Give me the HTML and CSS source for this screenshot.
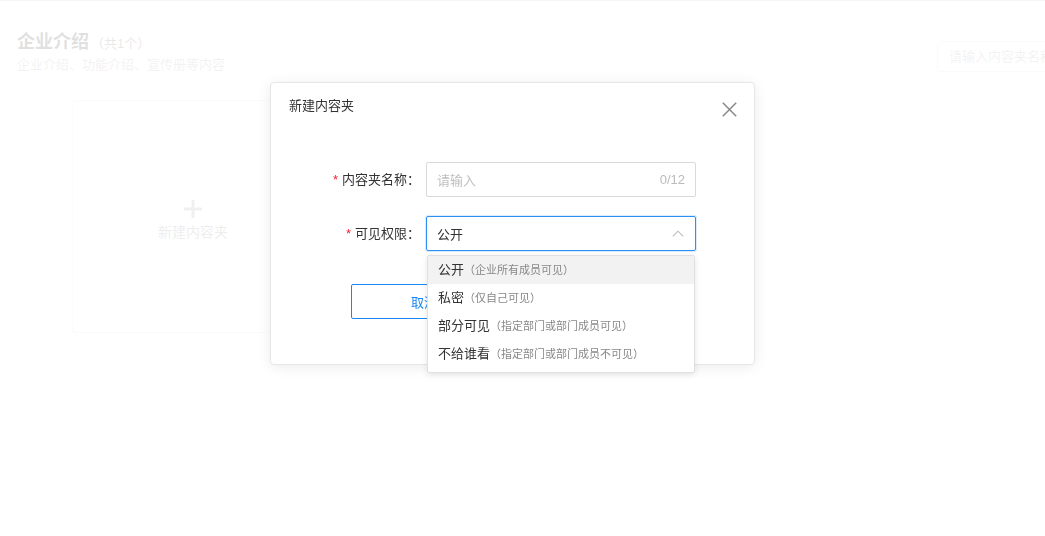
FILE: index.html
```html
<!DOCTYPE html>
<html lang="zh-CN">
<head>
<meta charset="utf-8">
<title>新建内容夹</title>
<link rel="stylesheet" href="styles.css">
</head>
<body>
<div class="page">
  <section class="content">
    <div class="head">
      <div class="titles">
        <h1 class="title">企业介绍<span class="count">（共1个）</span></h1>
        <p class="subtitle">企业介绍、功能介绍、宣传册等内容</p>
      </div>
      <div class="search">请输入内容夹名称</div>
    </div>
    <div class="cards">
      <div class="card-add">
        <svg class="plus" width="18" height="18" viewBox="0 0 18 18"><path d="M9 0v18M0 9h18" stroke="currentColor" stroke-width="3"/></svg>
        <span class="card-label">新建内容夹</span>
      </div>
    </div>
  </section>
</div>

<div class="mask"></div>

<div class="dialog">
  <div class="dialog-head">
    <span class="dialog-title">新建内容夹</span>
    <svg class="close" width="15" height="15" viewBox="0 0 15 15"><path d="M0.8 0.8L14.2 14.2M14.2 0.8L0.8 14.2" stroke="currentColor" stroke-width="1.5"/></svg>
  </div>
  <div class="form">
    <div class="row">
      <label class="label"><span class="req">*</span>内容夹名称：</label>
      <div class="input">
        <span class="placeholder">请输入</span>
        <span class="counter">0/12</span>
      </div>
    </div>
    <div class="row">
      <label class="label"><span class="req">*</span>可见权限：</label>
      <div class="select-wrap">
        <div class="select">
          <span class="value">公开</span>
          <svg class="arrow" width="12" height="7" viewBox="0 0 12 7"><path d="M0.8 6.3L6 1.2L11.2 6.3" fill="none" stroke="currentColor" stroke-width="1.1"/></svg>
        </div>
        <ul class="dropdown">
          <li class="option active">公开<span class="hint">（企业所有成员可见）</span></li>
          <li class="option">私密<span class="hint">（仅自己可见）</span></li>
          <li class="option">部分可见<span class="hint">（指定部门或部门成员可见）</span></li>
          <li class="option">不给谁看<span class="hint">（指定部门或部门成员不可见）</span></li>
        </ul>
      </div>
    </div>
  </div>
  <div class="footer">
    <button class="btn btn-cancel">取消</button>
    <button class="btn btn-ok">确定</button>
  </div>
</div>
</body>
</html>
```

FILE: styles.css
```css
* { box-sizing: border-box; }

html, body {
  margin: 0;
  padding: 0;
  width: 1045px;
  height: 536px;
  overflow: hidden;
  background: #fff;
  font-family: "Liberation Sans", "Noto Sans CJK SC", sans-serif;
  color: #333;
}

.page {
  border-top: 1px solid #bbb;
  height: 536px;
}

.content {
  padding: 29px 0 0 17px;
}

.head {
  display: flex;
  justify-content: space-between;
  align-items: flex-start;
}

.title {
  margin: 0;
  font-size: 18px;
  font-weight: 700;
  line-height: 24px;
  color: #333;
}

.count {
  font-size: 13px;
  font-weight: 400;
  color: #666;
  margin-left: 2px;
}

.subtitle {
  margin: 1px 0 0;
  font-size: 13px;
  line-height: 16px;
  color: #aaa;
}

.search {
  flex: 0 0 200px;
  margin-right: -92px;
  margin-top: 11px;
  height: 31px;
  border: 1px solid #ddd;
  border-radius: 4px;
  padding-left: 11px;
  font-size: 13px;
  line-height: 29px;
  color: #aaa;
  white-space: nowrap;
  overflow: hidden;
}

.cards {
  display: flex;
  padding: 27px 0 0 55px;
}

.card-add {
  width: 242px;
  height: 233px;
  border: 1px solid #e2e2e2;
  border-radius: 2px;
  display: flex;
  flex-direction: column;
  align-items: center;
  justify-content: center;
  gap: 4px;
  padding-top: 8px;
  color: #999;
}

.card-label {
  font-size: 14px;
  line-height: 20px;
  color: #888;
}

.mask {
  position: fixed;
  inset: 0;
  background: rgba(255, 255, 255, 0.85);
}

.dialog {
  position: fixed;
  left: 270px;
  top: 82px;
  width: 485px;
  height: 283px;
  background: #fff;
  border: 1px solid #e6e6e6;
  border-radius: 4px;
  box-shadow: 0 2px 14px rgba(0, 0, 0, 0.08);
}

.dialog-head {
  display: flex;
  justify-content: space-between;
  align-items: flex-start;
  padding: 14px 17px 0 18px;
}

.dialog-title {
  font-size: 13px;
  line-height: 18px;
  color: #333;
}

.close {
  margin-top: 5px;
  color: #888;
}

.form {
  margin-top: 45px;
  display: flex;
  flex-direction: column;
  gap: 19px;
}

.row {
  display: flex;
  align-items: center;
  gap: 6px;
}

.label {
  width: 149px;
  text-align: right;
  font-size: 13px;
  line-height: 18px;
  color: #333;
  white-space: nowrap;
}

.req {
  color: #f5222d;
  margin-right: 4px;
}

.input,
.select {
  width: 270px;
  height: 35px;
  border: 1px solid #d9d9d9;
  border-radius: 2px;
  display: flex;
  align-items: center;
  justify-content: space-between;
  padding: 0 10px;
  font-size: 13px;
}

.placeholder { color: #bfbfbf; }
.counter { color: #bbb; font-size: 13px; }

.select-wrap {
  position: relative;
}

.select {
  border-color: #2b8ff5;
  box-shadow: 0 0 0 1px rgba(43, 143, 245, 0.18);
}

.value { color: #333; }

.arrow {
  color: #bbb;
  margin-right: 1px;
}

.dropdown {
  position: absolute;
  z-index: 2;
  top: calc(100% + 4px);
  left: 1px;
  right: 1px;
  margin: 0;
  padding: 0 0 4px;
  list-style: none;
  background: #fff;
  border: 1px solid #e0e0e0;
  border-radius: 2px;
  box-shadow: 0 2px 6px rgba(0, 0, 0, 0.1);
}

.option {
  height: 28px;
  line-height: 28px;
  padding: 0 10px;
  font-size: 13px;
  color: #333;
  white-space: nowrap;
}

.option.active { background: #f2f2f2; }

.hint {
  font-size: 11px;
  color: #888;
}

.footer {
  display: flex;
  justify-content: center;
  gap: 31px;
  margin-top: 33px;
}

.btn {
  width: 146px;
  height: 35px;
  border-radius: 2px;
  font-family: inherit;
  font-size: 13px;
  cursor: pointer;
}

.btn-cancel {
  background: #fff;
  border: 1px solid #1a86f5;
  color: #1a86f5;
}

.btn-ok {
  background: #1a86f5;
  border: 1px solid #1a86f5;
  color: #fff;
}
```
